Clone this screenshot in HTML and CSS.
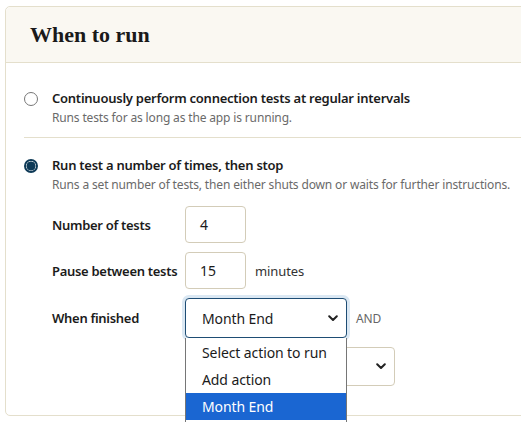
FILE: index.html
```html
<!DOCTYPE html>
<html lang="en">
<head>
<meta charset="utf-8">
<title>When to run</title>
<link rel="stylesheet" href="styles.css">
</head>
<body>
<section class="card">
  <header class="card-head">
    <h2 class="card-title">When to run</h2>
  </header>
  <div class="card-body">
    <label class="option option-first">
      <span class="radio"></span>
      <span class="option-text">
        <span class="option-title">Continuously perform connection tests at regular intervals</span>
        <span class="option-desc">Runs tests for as long as the app is running.</span>
      </span>
    </label>
    <div class="option option-second">
      <span class="radio radio-on"></span>
      <div class="option-text">
        <span class="option-title">Run test a number of times, then stop</span>
        <span class="option-desc">Runs a set number of tests, then either shuts down or waits for further instructions.</span>
        <div class="form-grid">
          <span class="field-label">Number of tests</span>
          <div class="field"><span class="input">4</span></div>
          <span class="field-label">Pause between tests</span>
          <div class="field"><span class="input">15</span><span class="unit">minutes</span></div>
          <span class="field-label">When finished</span>
          <div class="field field-select">
            <div class="select-wrap">
              <span class="select select-focus">Month End
                <svg class="chev" width="10" height="7" viewBox="0 0 10 7"><path d="M1.2 1.2L5 5l3.8-3.8" fill="none" stroke="#222" stroke-width="2" stroke-linecap="round" stroke-linejoin="round"/></svg>
              </span>
              <ul class="dropdown">
                <li>Select action to run</li>
                <li>Add action</li>
                <li class="active">Month End</li>
              </ul>
            </div>
            <span class="unit">AND</span>
          </div>
          <span></span>
          <div class="field">
            <span class="select select-wide">
              <svg class="chev" width="10" height="7" viewBox="0 0 10 7"><path d="M1.2 1.2L5 5l3.8-3.8" fill="none" stroke="#222" stroke-width="2" stroke-linecap="round" stroke-linejoin="round"/></svg>
            </span>
          </div>
        </div>
      </div>
    </div>
  </div>
</section>
</body>
</html>
```

FILE: styles.css
```css
html {
  overflow: hidden;
  height: 100%;
}
body {
  margin: 0;
  padding: 6px 0 0 5px;
  box-sizing: border-box;
  min-height: 100%;
  font-family: "Noto Sans", "Open Sans", sans-serif;
  color: #1b1b1b;
  background: #fff;
}
.card {
  border: 1px solid #e4dfcc;
  border-radius: 5px;
  margin-right: -14px;
  background: #fff;
}
.card-head {
  background: #faf8f2;
  border-bottom: 1px solid #e4dfcc;
  border-radius: 5px 5px 0 0;
  height: 55px;
  display: flex;
  align-items: center;
  padding-left: 24px;
}
.card-title {
  margin: 0;
  font-family: "Liberation Serif", "DejaVu Serif", serif;
  font-size: 22px;
  font-weight: 700;
  color: #1a1a1a;
  padding-top: 1px;
}
.card-body {
  padding: 25px 0 29px 18px;
}
.option {
  display: flex;
  gap: 14px;
}
.option-first {
  padding-bottom: 9px;
  border-bottom: 1px solid #e4dfcc;
}
.option-second {
  padding-top: 17px;
}
.radio {
  flex: none;
  width: 14px;
  height: 14px;
  border: 1px solid #777;
  border-radius: 50%;
  box-sizing: border-box;
  margin-top: 4px;
  background: #fff;
}
.radio-on {
  border: 2px solid #0e3a57;
  background: radial-gradient(circle, #0e3a57 0 4.2px, #fff 4.8px);
}
.option-text {
  display: flex;
  flex-direction: column;
}
.option-title {
  font-size: 13px;
  font-weight: 600;
  line-height: 20px;
  letter-spacing: -0.25px;
}
.option-desc {
  font-size: 12px;
  line-height: 20px;
  color: #6a6a6a;
  letter-spacing: -0.15px;
  white-space: nowrap;
}
.form-grid {
  display: grid;
  grid-template-columns: 133px auto;
  row-gap: 9px;
  margin-top: 11px;
  align-items: center;
}
.field-label {
  font-size: 13px;
  font-weight: 600;
  letter-spacing: -0.3px;
}
.field {
  display: flex;
  align-items: center;
  gap: 9px;
}
.input {
  box-sizing: border-box;
  width: 61px;
  height: 37px;
  border: 1px solid #d3ccb8;
  border-radius: 4px;
  padding-left: 14px;
  display: flex;
  align-items: center;
  font-size: 14px;
}
.unit {
  font-size: 13px;
  color: #333;
  letter-spacing: -0.1px;
}
.field-select .unit {
  color: #666;
  font-size: 12px;
}
.select-wrap {
  position: relative;
}
.select {
  box-sizing: border-box;
  height: 40px;
  border: 1px solid #d3ccb8;
  border-radius: 4px;
  padding: 0 8px 0 16px;
  display: flex;
  align-items: center;
  justify-content: space-between;
  font-size: 14px;
  letter-spacing: -0.1px;
  color: #1b1b1b;
  background: #fff;
}
.select-focus {
  width: 162px;
  border-color: #1e4d74;
  box-shadow: 0 0 0 3px #dbe8f3;
}
.select-wide {
  width: 210px;
  height: 39px;
  justify-content: flex-end;
}
.chev {
  display: block;
}
.dropdown {
  position: absolute;
  left: 0;
  top: 40px;
  width: 162px;
  box-sizing: border-box;
  margin: 0;
  padding: 1px 0 12px;
  list-style: none;
  background: #fff;
  border: 1px solid #767676;
  border-top: none;
  z-index: 2;
}
.dropdown li {
  height: 27px;
  line-height: 27px;
  padding-left: 16px;
  font-size: 14px;
  letter-spacing: -0.1px;
  color: #1b1b1b;
}
.dropdown li.active {
  background: #1a66d2;
  color: #fff;
}
```
